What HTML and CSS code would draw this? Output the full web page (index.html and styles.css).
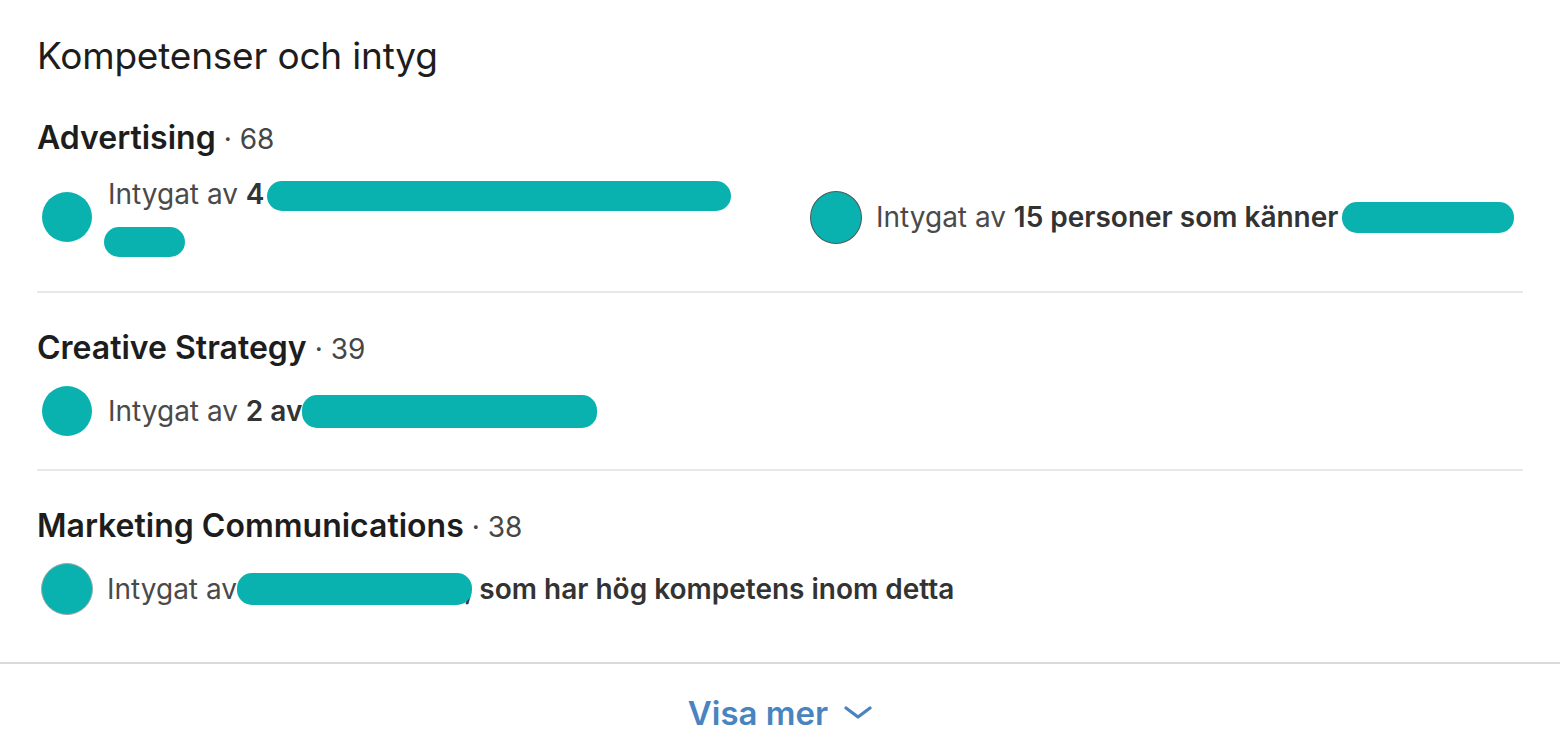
FILE: index.html
```html
<!DOCTYPE html>
<html lang="sv">
<head>
<meta charset="utf-8">
<title>Kompetenser och intyg</title>
<link rel="stylesheet" href="styles.css">
</head>
<body>
<div class="card">
  <div class="inner">
    <h1 class="title">Kompetenser och intyg</h1>

    <section class="skill">
      <h2 class="skill-name">Advertising <span class="count">· 68</span></h2>
      <div class="endorsements">
        <div class="item item-left">
          <span class="avatar"></span>
          <p class="text two-line">Intygat av <b>4</b> <span class="redact r1"></span><br><span class="redact r2"></span></p>
        </div>
        <div class="item">
          <span class="avatar avatar-dark"></span>
          <p class="text">Intygat av <b>15 personer som känner</b><span class="redact r3"></span></p>
        </div>
      </div>
    </section>

    <section class="skill">
      <h2 class="skill-name">Creative Strategy <span class="count">· 39</span></h2>
      <div class="endorsements">
        <div class="item item-left">
          <span class="avatar"></span>
          <p class="text">Intygat av <b>2 av</b><span class="redact r4"></span></p>
        </div>
      </div>
    </section>

    <section class="skill last">
      <h2 class="skill-name">Marketing Communications <span class="count">· 38</span></h2>
      <div class="endorsements">
        <div class="item item-left">
          <span class="avatar avatar-grey"></span>
          <p class="text">Intygat av<span class="redact r5"></span><b>, som har hög kompetens inom detta</b></p>
        </div>
      </div>
    </section>
  </div>

  <div class="footer">
    <button class="more">Visa mer
      <svg class="chev" width="28" height="14" viewBox="0 0 28 14" aria-hidden="true"><path d="M2 2 L14 11 L26 2" fill="none" stroke="currentColor" stroke-width="3.2" stroke-linecap="round" stroke-linejoin="round"/></svg>
    </button>
  </div>
</div>
</body>
</html>
```

FILE: styles.css
```css
html, body {
  margin: 0;
  padding: 0;
  background: #ffffff;
}

body {
  font-family: Inter, "Noto Sans", "Liberation Sans", sans-serif;
  color: rgba(0, 0, 0, 0.9);
}

.card {
  width: 1560px;
}

.inner {
  padding: 0 37px;
}

.title {
  margin: 0;
  padding-top: 32px;
  font-size: 37px;
  font-weight: 400;
  line-height: 48px;
  color: #1d1d1d;
  letter-spacing: -0.2px;
}

.skill {
  padding-top: 35px;
  padding-bottom: 28px;
  border-bottom: 2px solid #e6e9ec;
}

.skill:first-of-type {
  padding-top: 38px;
}

.skill.last {
  border-bottom: none;
  padding-bottom: 43px;
}

.skill-name {
  margin: 0;
  font-size: 32px;
  line-height: 40px;
  font-weight: 600;
  color: #1d1d1d;
}

.count {
  font-weight: 400;
  font-size: 28px;
  color: #464646;
}

.endorsements {
  margin-top: 12px;
  display: flex;
}

.item {
  display: flex;
  align-items: center;
  min-height: 60px;
}

.item-left {
  width: 773px;
  padding-left: 5px;
  box-sizing: border-box;
}

.avatar {
  flex: none;
  width: 50px;
  height: 50px;
  border-radius: 50%;
  background: #0ab2af;
  margin-right: 16px;
}

.avatar-dark {
  box-sizing: border-box;
  border: 1px solid #4b5a5a;
  width: 52px;
  height: 53px;
  margin-right: 14px;
}

.avatar-grey {
  box-sizing: border-box;
  border: 1px solid #9aa;
  width: 52px;
  height: 52px;
  margin-left: -1px;
  margin-right: 14px;
}

.text {
  margin: 0;
  font-size: 28px;
  line-height: 46px;
  color: #4a4a4a;
  white-space: nowrap;
}

.text b {
  font-weight: 600;
  color: #333333;
}

.redact {
  display: inline-block;
  vertical-align: middle;
  height: 30px;
  border-radius: 15px;
  background: #0ab2af;
  position: relative;
  top: -2px;
}

.r1 { width: 464px; margin-left: -5px; top: 0; }
.r2 { width: 81px; margin-left: -4px; top: 0; }
.r3 { width: 172px; height: 31px; margin-left: 4px; }
.r4 { width: 295px; height: 33px; }
.r5 { width: 235px; height: 32px; margin-right: -8px; }

.footer {
  border-top: 2px solid #dadada;
  display: flex;
  justify-content: center;
  padding-top: 27px;
}

.more {
  border: none;
  background: none;
  padding: 0;
  font-family: inherit;
  font-size: 33px;
  font-weight: 600;
  color: #4a84bf;
  display: flex;
  align-items: center;
  gap: 16px;
  line-height: 44px;
  cursor: pointer;
}

.chev {
  display: block;
  margin-top: 0;
}
```
